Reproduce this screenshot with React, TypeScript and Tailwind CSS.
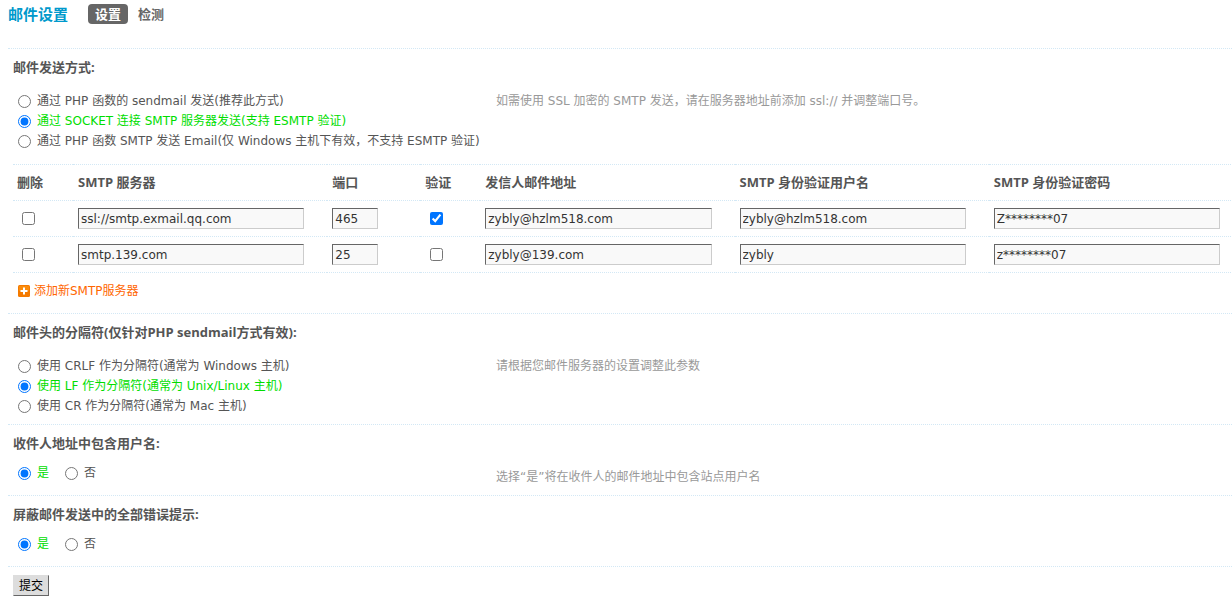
import React, { useState } from 'react';

interface Server {
  id: number;
  host: string;
  port: string;
  auth: boolean;
  from: string;
  username: string;
  password: string;
}

interface Option {
  value: string;
  label: string;
}

const initialServers: Server[] = [
  {
    id: 1,
    host: 'ssl://smtp.exmail.qq.com',
    port: '465',
    auth: true,
    from: 'zybly@hzlm518.com',
    username: 'zybly@hzlm518.com',
    password: 'Z********07',
  },
  {
    id: 2,
    host: 'smtp.139.com',
    port: '25',
    auth: false,
    from: 'zybly@139.com',
    username: 'zybly',
    password: 'z********07',
  },
];

const sendOptions: Option[] = [
  { value: '1', label: '通过 PHP 函数的 sendmail 发送(推荐此方式)' },
  { value: '2', label: '通过 SOCKET 连接 SMTP 服务器发送(支持 ESMTP 验证)' },
  { value: '3', label: '通过 PHP 函数 SMTP 发送 Email(仅 Windows 主机下有效，不支持 ESMTP 验证)' },
];

const delimiterOptions: Option[] = [
  { value: '1', label: '使用 CRLF 作为分隔符(通常为 Windows 主机)' },
  { value: '0', label: '使用 LF 作为分隔符(通常为 Unix/Linux 主机)' },
  { value: '2', label: '使用 CR 作为分隔符(通常为 Mac 主机)' },
];

const yesNo: Option[] = [
  { value: '1', label: '是' },
  { value: '0', label: '否' },
];

const boldText = "font-['Open_Sans','Noto_Sans_CJK_SC',sans-serif] text-[13px] font-bold";

interface SettingProps {
  name: string;
  title: string;
  hint?: string;
  options: Option[];
  defaultValue: string;
  inline?: boolean;
}

const Setting: React.FC<SettingProps> = ({ name, title, hint, options, defaultValue, inline }) => {
  const [selected, setSelected] = useState(defaultValue);

  return (
    <fieldset className="pl-[5px]">
      <legend className={`pt-2 leading-5 ${boldText}`}>{title}</legend>
      <div className={`grid grid-cols-[483px_1fr] ${inline ? 'items-end pt-[10px]' : 'pt-[14px]'}`}>
        <div className={`flex pl-[5px] ${inline ? 'gap-4 pb-1' : 'flex-col'}`}>
          {options.map(option => (
            <label
              key={option.value}
              className={`flex items-center gap-[6px] whitespace-nowrap leading-5 ${
                selected === option.value ? 'text-[#00dd00]' : ''
              }`}
            >
              <input
                type="radio"
                name={name}
                value={option.value}
                checked={selected === option.value}
                onChange={() => setSelected(option.value)}
                className="h-[13px] w-[13px]"
              />
              {option.label}
            </label>
          ))}
        </div>
        {hint && <p className="leading-5 text-[#999999]">{hint}</p>}
      </div>
    </fieldset>
  );
};

interface TextBoxProps {
  label: string;
  value: string;
  onChange: (value: string) => void;
}

const TextBox: React.FC<TextBoxProps> = ({ label, value, onChange }) => (
  <input
    type="text"
    aria-label={label}
    value={value}
    onChange={e => onChange(e.target.value)}
    className="block h-[21px] w-full border border-t-[#666666] border-r-[#cccccc] border-b-[#cccccc] border-l-[#666666] bg-[#f9f9f9] px-[2px] text-[#333333]"
  />
);

const App: React.FC = () => {
  const [servers, setServers] = useState<Server[]>(initialServers);

  const update = (id: number, changes: Partial<Server>) => {
    setServers(prev => prev.map(s => (s.id === id ? { ...s, ...changes } : s)));
  };

  const addServer = () => {
    setServers(prev => [
      ...prev,
      { id: Date.now(), host: '', port: '25', auth: false, from: '', username: '', password: '' },
    ]);
  };

  return (
    <div className="pb-2 pl-2 font-['DejaVu_Sans','Noto_Sans_CJK_SC',sans-serif] text-xs text-[#555555]">
      {/* Title and tabs */}
      <header className="flex h-12 items-start gap-5 pt-1">
        <h1 className="font-['Noto_Sans_CJK_SC',sans-serif] text-[15px] font-bold leading-5 text-[#0099cc]">邮件设置</h1>
        <nav className={`flex gap-[3px] leading-5 ${boldText}`}>
          <a href="#setting" className="rounded bg-[#666666] px-[7px] text-white">设置</a>
          <a href="#check" className="px-[7px] text-[#666666]">检测</a>
        </nav>
      </header>

      <form onSubmit={e => e.preventDefault()}>
        <section className="border-t border-dotted border-[#d3e8f5] pb-1">
          <Setting
            name="mailsend"
            title="邮件发送方式:"
            hint="如需使用 SSL 加密的 SMTP 发送，请在服务器地址前添加 ssl:// 并调整端口号。"
            options={sendOptions}
            defaultValue="2"
          />

          {/* SMTP servers */}
          <div className="ml-[5px] overflow-hidden pt-[13px]">
            <table className="w-[calc(100%+11px)] table-fixed border-collapse text-left">
              <thead>
                <tr className={`h-9 border-y border-dotted border-[#d3e8f5] ${boldText}`}>
                  <th className="w-[60px] pl-1">删除</th>
                  <th className="pl-[5px]">SMTP 服务器</th>
                  <th className="w-[93px] pl-[5px]">端口</th>
                  <th className="w-[60px] pl-[5px]">验证</th>
                  <th className="pl-[5px]">发信人邮件地址</th>
                  <th className="pl-[5px]">SMTP 身份验证用户名</th>
                  <th className="pl-[5px]">SMTP 身份验证密码</th>
                </tr>
              </thead>
              <tbody>
                {servers.map(server => (
                  <tr key={server.id} className="h-9 border-b border-dotted border-[#d3e8f5]">
                    <td className="pl-[9px]">
                      <input type="checkbox" aria-label="删除" className="block h-[13px] w-[13px]" />
                    </td>
                    <td className="pr-[23px] pl-[5px]">
                      <TextBox label="SMTP 服务器" value={server.host} onChange={host => update(server.id, { host })} />
                    </td>
                    <td className="pr-[42px] pl-[5px]">
                      <TextBox label="端口" value={server.port} onChange={port => update(server.id, { port })} />
                    </td>
                    <td className="pl-[10px]">
                      <input
                        type="checkbox"
                        aria-label="验证"
                        checked={server.auth}
                        onChange={e => update(server.id, { auth: e.target.checked })}
                        className="block h-[13px] w-[13px]"
                      />
                    </td>
                    <td className="pr-[23px] pl-[5px]">
                      <TextBox label="发信人邮件地址" value={server.from} onChange={from => update(server.id, { from })} />
                    </td>
                    <td className="pr-[23px] pl-[5px]">
                      <TextBox
                        label="SMTP 身份验证用户名"
                        value={server.username}
                        onChange={username => update(server.id, { username })}
                      />
                    </td>
                    <td className="pr-[23px] pl-[5px]">
                      <TextBox
                        label="SMTP 身份验证密码"
                        value={server.password}
                        onChange={password => update(server.id, { password })}
                      />
                    </td>
                  </tr>
                ))}
              </tbody>
            </table>
            <button type="button" onClick={addServer} className="flex h-9 items-center gap-1 pl-[5px] text-[#ff6600]">
              <svg width="12" height="12" viewBox="0 0 12 12" aria-hidden="true">
                <rect width="12" height="12" rx="1.5" fill="#f47a00" />
                <rect x="1" y="1" width="10" height="5" fill="#fb8c0c" />
                <path d="M6 2.5v7M2.5 6h7" stroke="#fff" strokeWidth="2" />
              </svg>
              添加新SMTP服务器
            </button>
          </div>
        </section>

        <section className="border-t border-dotted border-[#d3e8f5] pb-2">
          <Setting
            name="maildelimiter"
            title="邮件头的分隔符(仅针对PHP sendmail方式有效):"
            hint="请根据您邮件服务器的设置调整此参数"
            options={delimiterOptions}
            defaultValue="0"
          />
        </section>

        <section className="border-t border-dotted border-[#d3e8f5] pb-2">
          <Setting
            name="mailusername"
            title="收件人地址中包含用户名:"
            hint="选择“是”将在收件人的邮件地址中包含站点用户名"
            options={yesNo}
            defaultValue="1"
            inline
          />
        </section>

        <section className="border-t border-dotted border-[#d3e8f5] pb-2">
          <Setting
            name="sendmail_silent"
            title="屏蔽邮件发送中的全部错误提示:"
            options={yesNo}
            defaultValue="1"
            inline
          />
        </section>

        <div className="border-t border-dotted border-[#d3e8f5] pt-2 pl-[5px]">
          <button
            type="submit"
            className="h-[21px] border border-t-[#dddddd] border-r-[#666666] border-b-[#666666] border-l-[#dddddd] bg-[#dddddd] px-[5px] leading-none text-black"
          >
            提交
          </button>
        </div>
      </form>
    </div>
  );
};

export default App;
